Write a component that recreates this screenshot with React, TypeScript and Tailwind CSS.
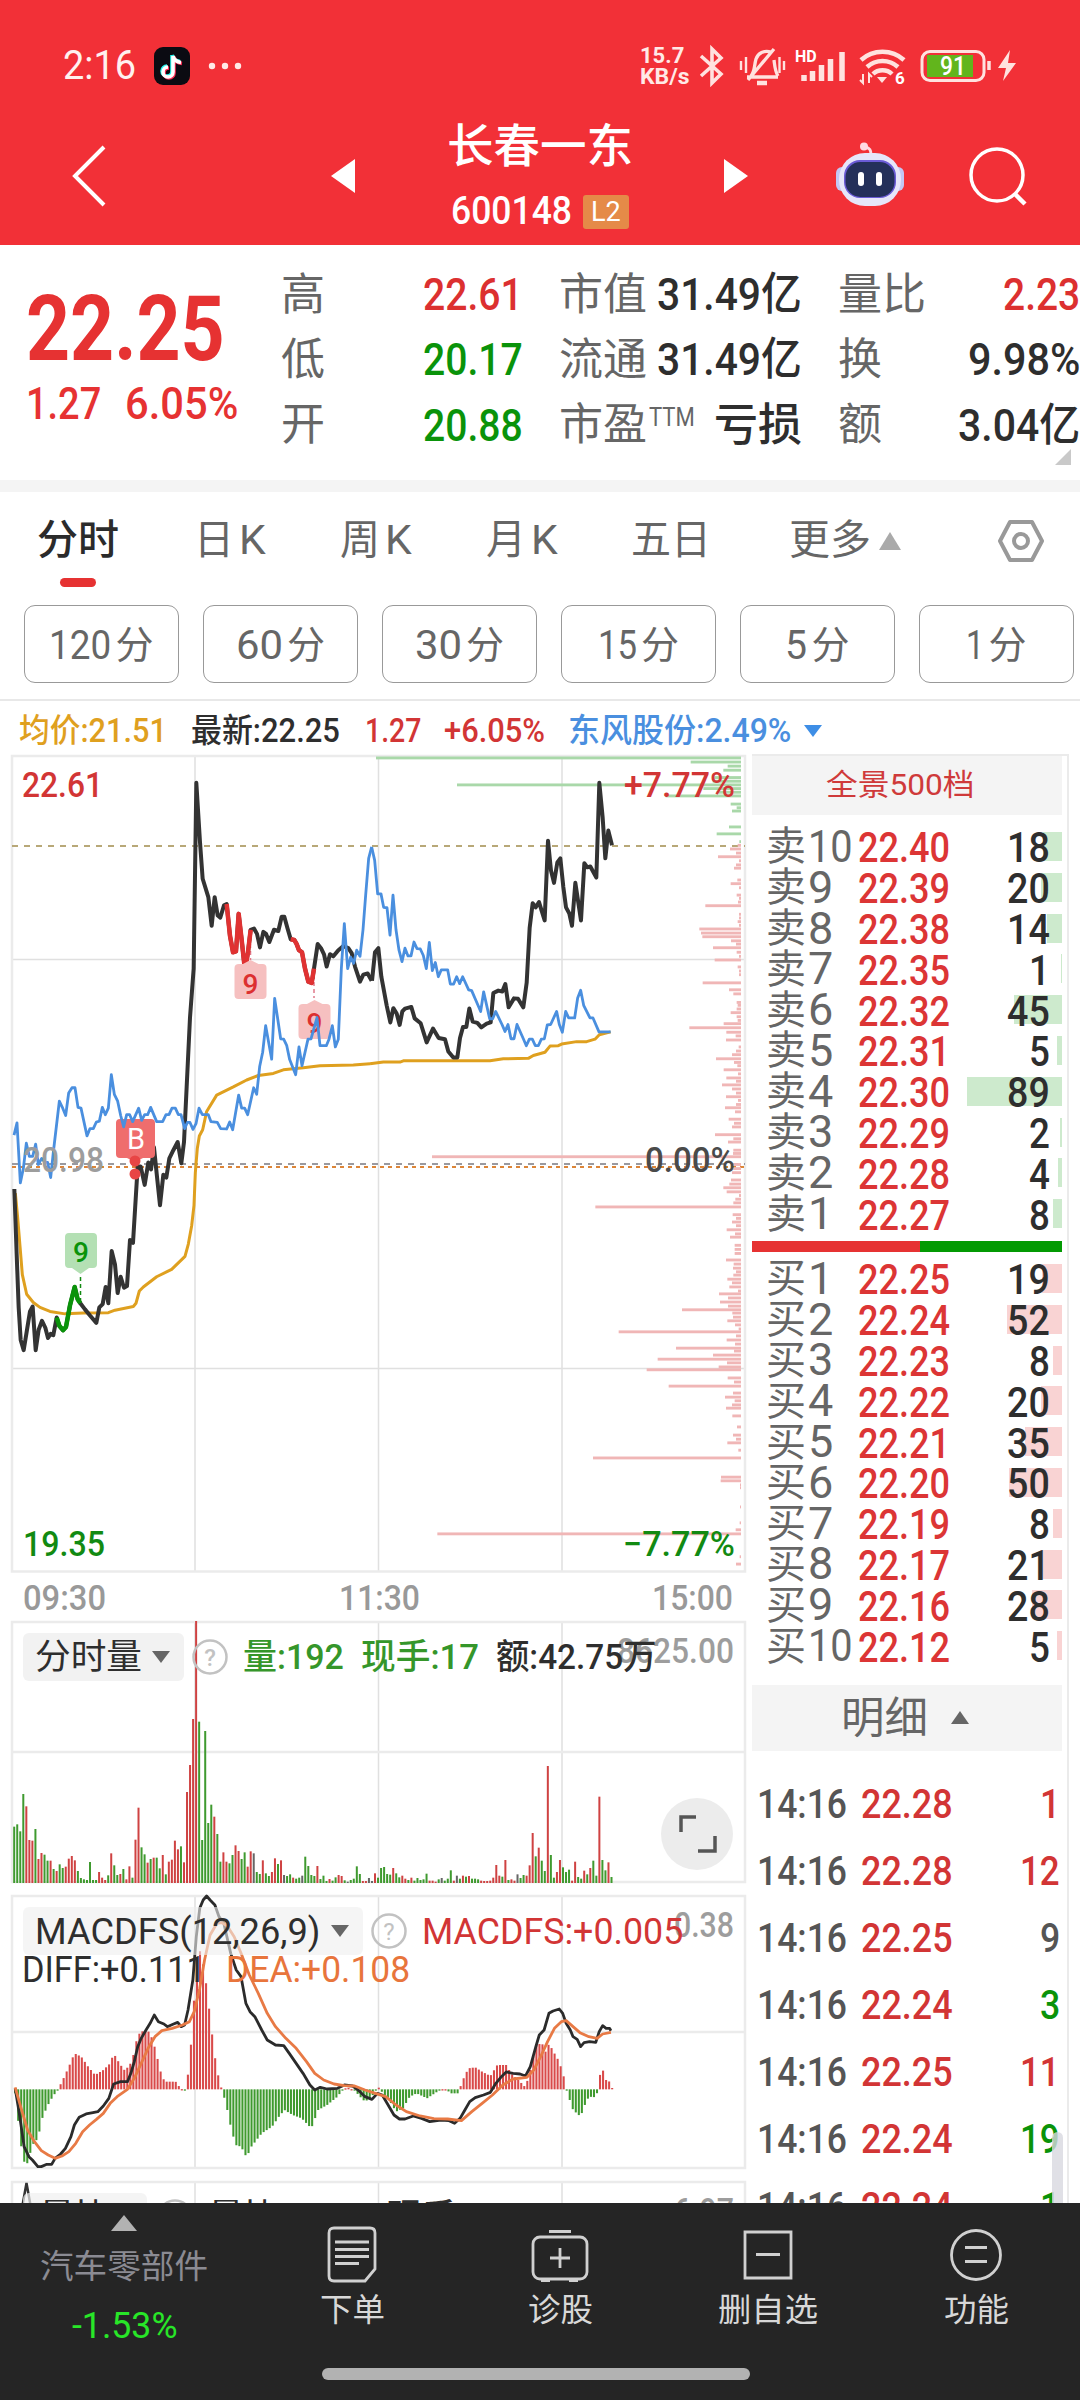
import { useLayoutEffect, useRef, useState } from "react";
import type { ReactNode } from "react";

// Text squeezed or stretched horizontally to a known width
function Fit({
  w,
  className = "",
  children,
}: {
  w: number;
  className?: string;
  children: ReactNode;
}) {
  const ref = useRef<HTMLSpanElement>(null);
  const [scale, setScale] = useState(1);

  useLayoutEffect(() => {
    if (ref.current) setScale(w / ref.current.offsetWidth);
  }, [w]);

  return (
    <span
      className={`inline-flex shrink-0 leading-none ${className}`}
      style={{ width: w }}
    >
      <span
        ref={ref}
        className="inline-block shrink-0 origin-left whitespace-nowrap"
        style={{ transform: `scaleX(${scale})` }}
      >
        {children}
      </span>
    </span>
  );
}

function StatusBar() {
  return (
    <div className="flex h-[132px] items-center pl-[63px] text-white">
      <Fit w={73} className="text-[40px] text-[#fff1ef]">
        2:16
      </Fit>
      <svg viewBox="0 0 36 38" className="ml-[18px] h-[38px] w-9">
        <rect width="36" height="38" rx="9" fill="#0b0b12" />
        <g fill="none" strokeWidth="3.6">
          <path d="M18 8v16a5 5 0 1 1-5-5M18 8c1 4 4 6 8 6.500" stroke="#25f4ee" />
          <path d="M20 10v16a5 5 0 1 1-5-5M20 10c1 4 4 6 8 6.500" stroke="#fe2c55" />
          <path d="M19 9v16a5 5 0 1 1-5-5M19 9c1 4 4 6 8 6.500" stroke="#fff" />
        </g>
      </svg>
      <svg viewBox="0 0 34 8" className="ml-[18px] h-2 w-[34px]" fill="#ffe9e6">
        <circle cx="4" cy="4" r="3.200" />
        <circle cx="17" cy="4" r="3.200" />
        <circle cx="30" cy="4" r="3.200" />
      </svg>
      <div className="ml-[398px] flex flex-col text-[#ffe9e6]">
        <Fit w={44} className="text-[22px] font-bold">
          15.7
        </Fit>
        <Fit w={50} className="-mt-px text-[22px] font-bold">
          KB/s
        </Fit>
      </div>
      <svg
        viewBox="698 40 324 52"
        className="ml-[8px] h-[52px] w-[324px]"
        fill="none"
        stroke="#ffe2df"
        strokeWidth="3.600"
      >
        <path d="M701 56l20 18-9 9V49l9 9-20 18" />
        <path d="M747 77h31M751 76c4-5 3-10 5-17 2-6 8-9 15-7M774 60c1 8 1 11 4 16M748 80L774 49" strokeWidth="3.300" />
        <path d="M741 61v9M746 57v16M779.500 57v16M784 61v9" strokeWidth="2.400" />
        <path d="M757 83h10" strokeWidth="4.500" />
        <path d="M804 81v-6M812.500 81V71M821.500 81V65M830.500 81V59M842 81V52" strokeWidth="5.500" />
        <path d="M861 60c12-11 31-11 43 0M867 67c9-8 22-8 31 0M873 74c5-5 14-5 19 0" strokeWidth="4.500" />
        <path d="M877 77h10l-5 6z" fill="#ffe2df" stroke="none" />
        <path d="M863 74v9l-3-3M869 83v-9l3 3" strokeWidth="2" />
        <rect x="922" y="51.500" width="62" height="29" rx="8" strokeWidth="3" />
        <rect x="927" y="55" width="46" height="22" fill="#62b51c" stroke="none" />
        <path d="M989 61v9" strokeWidth="3.500" />
        <path d="M1010 50l-12 18h8l-3 13 13-18h-8z" fill="#ffe2df" stroke="none" />
        <g fill="#fff" stroke="none" fontFamily="Roboto, sans-serif" fontWeight="700">
          <text x="795" y="62" fontSize="16">HD</text>
          <text x="895" y="84" fontSize="17">6</text>
          <text x="940" y="74.500" fontSize="25" fontWeight="500" textLength="26" lengthAdjust="spacingAndGlyphs">91</text>
        </g>
      </svg>
    </div>
  );
}

function Header() {
  return (
    <header className="h-[245px] bg-[#f23037]">
      <StatusBar />
      <div className="flex h-[88px] items-center text-white">
        <svg viewBox="0 0 36 64" className="ml-[71px] h-16 w-9" fill="none" stroke="#fff" strokeWidth="4">
          <path d="M33 3L4 32l29 29" />
        </svg>
        <svg viewBox="0 0 24 34" className="ml-[224px] h-[34px] w-6" fill="#fff">
          <path d="M24 0v34L0 17z" />
        </svg>
        <div className="ml-[92px] flex h-[114px] w-[186px] flex-col items-center pt-[4px]">
          <Fit w={186} className="text-[46px] font-medium">
            长春一东
          </Fit>
          <div className="mt-[23px] flex items-center gap-[11px]">
            <Fit w={121} className="text-[39px] font-medium">
              600148
            </Fit>
            <div className="flex h-[34px] w-[46px] items-center justify-center rounded-[3px] bg-[#e58a48]">
              <Fit w={30} className="text-[28px]">
                L2
              </Fit>
            </div>
          </div>
        </div>
        <svg viewBox="0 0 24 34" className="ml-[91px] h-[34px] w-6" fill="#fff">
          <path d="M0 0v34l24-17z" />
        </svg>
        <svg viewBox="0 0 70 66" className="ml-[87px] -mt-1 h-[66px] w-[70px]">
          <path d="M36 14c0-5-1-7-6-8" fill="none" stroke="#ffd9e2" strokeWidth="3" />
          <circle cx="29" cy="5.500" r="4" fill="#ffd9e2" />
          <rect x="1" y="26" width="12" height="24" rx="6" fill="#c3c7f4" />
          <rect x="57" y="26" width="12" height="24" rx="6" fill="#c3c7f4" />
          <rect x="4" y="12" width="62" height="53" rx="26" fill="#e6e6fa" />
          <rect x="9" y="19" width="52" height="38" rx="16" fill="#6a5bd6" />
          <rect x="10.500" y="21" width="49" height="35" rx="15" fill="#24305a" />
          <rect x="23" y="31" width="6" height="14" rx="3" fill="#fff" />
          <rect x="41" y="31" width="6" height="14" rx="3" fill="#fff" />
        </svg>
        <svg viewBox="0 0 60 60" className="ml-[64px] h-[60px] w-[60px]" fill="none" stroke="#fff" strokeWidth="3.500">
          <circle cx="28" cy="29" r="26" />
          <path d="M46 48l10 10" strokeWidth="4.500" />
        </svg>
      </div>
    </header>
  );
}

function QuoteLabel({ children }: { children: ReactNode }) {
  return <span className="text-[44px] leading-none text-[#666]">{children}</span>;
}

function Quote() {
  return (
    <section className="relative flex h-[235px] bg-white">
      <div className="w-[281px] pl-[26px] text-[#e63232]">
        <Fit w={199} className="mt-[40px] text-[90px] font-bold">
          22.25
        </Fit>
        <div className="mt-[6px] flex gap-[24px]">
          <Fit w={75} className="text-[45px] font-medium">
            1.27
          </Fit>
          <Fit w={113} className="text-[45px] font-medium">
            6.05%
          </Fit>
        </div>
      </div>
      <div className="grid h-[213px] w-[242px] grid-rows-3 items-center pt-[17px]">
        <div className="flex items-center justify-between">
          <QuoteLabel>高</QuoteLabel>
          <Fit w={100} className="text-[45px] font-medium text-[#dc3030]">22.61</Fit>
        </div>
        <div className="flex items-center justify-between">
          <QuoteLabel>低</QuoteLabel>
          <Fit w={100} className="text-[45px] font-medium text-[#0a930a]">20.17</Fit>
        </div>
        <div className="flex items-center justify-between">
          <QuoteLabel>开</QuoteLabel>
          <Fit w={100} className="text-[45px] font-medium text-[#0a930a]">20.88</Fit>
        </div>
      </div>
      <div className="ml-[36px] grid h-[213px] w-[243px] grid-rows-3 items-center pt-[17px] text-[#2e2e2e]">
        <div className="flex items-center justify-between">
          <QuoteLabel>市值</QuoteLabel>
          <Fit w={145} className="text-[45px] font-medium">31.49亿</Fit>
        </div>
        <div className="flex items-center justify-between">
          <QuoteLabel>流通</QuoteLabel>
          <Fit w={145} className="text-[45px] font-medium">31.49亿</Fit>
        </div>
        <div className="flex items-center">
          <QuoteLabel>市盈</QuoteLabel>
          <Fit w={46} className="ml-[2px] -mt-4 text-[25px] text-[#666]">TTM</Fit>
          <Fit w={88} className="ml-auto text-[45px] font-medium">亏损</Fit>
        </div>
      </div>
      <div className="ml-[36px] grid h-[213px] w-[242px] grid-rows-3 items-center pt-[17px] text-[#2e2e2e]">
        <div className="flex items-center justify-between">
          <QuoteLabel>量比</QuoteLabel>
          <Fit w={77} className="text-[45px] font-medium text-[#dc3030]">2.23</Fit>
        </div>
        <div className="flex items-center justify-between">
          <QuoteLabel>换</QuoteLabel>
          <Fit w={112} className="text-[45px] font-medium">9.98%</Fit>
        </div>
        <div className="flex items-center justify-between">
          <QuoteLabel>额</QuoteLabel>
          <Fit w={122} className="text-[45px] font-medium">3.04亿</Fit>
        </div>
      </div>
      <svg viewBox="0 0 16 16" className="absolute right-[9px] bottom-[15px] h-4 w-4" fill="#c9c9c9">
        <path d="M16 0v16H0z" />
      </svg>
    </section>
  );
}

function Tabs() {
  const periods = [
    { label: "120", w: 62 },
    { label: "60", w: 47 },
    { label: "30", w: 47 },
    { label: "15", w: 39 },
    { label: "5", w: 22 },
    { label: "1", w: 18 },
  ];

  return (
    <section className="h-[209px] border-b-2 border-[#e8e8e8]">
      <div className="flex h-[95px] items-center pt-[2px] pl-[37px] text-[41px] text-[#666]">
        <Fit w={82} className="font-medium text-[#2b2b2b]">分时</Fit>
        <Fit w={40} className="ml-[75px]">日</Fit>
        <Fit w={27} className="ml-[5px]">K</Fit>
        <Fit w={40} className="ml-[74px]">周</Fit>
        <Fit w={27} className="ml-[5px]">K</Fit>
        <Fit w={40} className="ml-[74px]">月</Fit>
        <Fit w={27} className="ml-[5px]">K</Fit>
        <Fit w={80} className="ml-[73px]">五日</Fit>
        <Fit w={82} className="ml-[78px]">更多</Fit>
        <svg viewBox="0 0 22 18" className="ml-[8px] h-[18px] w-[22px]" fill="#aaa">
          <path d="M11 0l11 18H0z" />
        </svg>
        <svg viewBox="0 0 46 44" className="ml-[97px] h-11 w-[46px]" fill="none" stroke="#999" strokeWidth="4" strokeLinejoin="round">
          <path d="M12 3h22l10 19-10 19H12L2 22z" />
          <circle cx="23" cy="22" r="7" />
        </svg>
      </div>
      <div className="-mt-[9px] ml-[60px] h-[9px] w-9 rounded-full bg-[#e63232]" />
      <div className="mt-[18px] flex gap-6 pl-6">
        {periods.map(({ label, w }) => (
          <button
            key={label}
            className="flex h-[78px] w-[155px] shrink-0 items-center justify-center gap-[4px] rounded-[11px] border-[1.500px] border-[#999] pt-[2px] text-[41px] text-[#666]"
          >
            <Fit w={w}>{label}</Fit>
            <span className="text-[38px] leading-none">分</span>
          </button>
        ))}
      </div>
    </section>
  );
}

function Legend() {
  return (
    <div className="flex h-[39px] items-end pl-[19px] text-[33px]">
      <div className="-mb-[4px] flex h-[27px] items-center">
        <Fit w={148} className="font-medium text-[#dfa01f]">均价:21.51</Fit>
        <Fit w={149} className="ml-[24px] font-medium text-[#2e2e2e]">最新:22.25</Fit>
        <Fit w={56} className="ml-[25px] font-medium text-[#d23535]">1.27</Fit>
        <Fit w={101} className="ml-[23px] font-medium text-[#d23535]">+6.05%</Fit>
        <Fit w={223} className="ml-[23px] font-medium text-[#4a8fdf]">东风股份:2.49%</Fit>
        <svg viewBox="0 0 18 12" className="ml-[13px] h-3 w-[18px]" fill="#3e8ee6">
          <path d="M0 0h18l-9 12z" />
        </svg>
      </div>
    </div>
  );
}

const priceA =
  "43,1100 50,1260 56,1390 62,1470 71,1495 80,1450 90,1400 98,1388 107,1495 116,1445 126,1423 136,1440 144,1465 152,1455 160,1458 170,1415 178,1435 189,1446 198,1438 210,1385 224,1340 233,1370 241,1380 255,1395 270,1410 289,1428 298,1390 308,1382 317,1340 325,1380 335,1252 345,1285 353,1355 362,1315 372,1342 381,1338 390,1225 399,1232 413,1045 422,1045 434,1090 445,1035 453,1052 462,998 471,1070 480,1140 490,1065 499,1072 508,1025 520,1005 533,985 544,1037 552,985 560,850 570,680 581,560 589,105 600,250 608,340 625,385 635,455 644,385 653,430 661,435 672,405 680,402 690,480 699,520 708,518 716,426 725,490 735,565 744,520 752,465 762,462 771,475 780,508 790,470 798,475 808,495 822,465 835,468 845,433 853,433 862,460 872,488 883,490 890,500 897,515 906,520 915,560 925,592 935,595 942,560 953,500 963,510 972,525 980,555 990,525 1000,530 1015,515 1030,505 1045,510 1055,522 1065,555 1080,592 1090,575 1103,572 1115,590";
const priceB =
  "6,590 15,520 25,510 34,580 50,650 61,692 70,657 80,670 89,698 97,665 105,658 124,654 134,682 152,694 170,741 189,707 206,730 225,733 235,763 250,778 262,778 270,730 279,703 289,703 298,658 308,690 322,693 334,704 350,695 362,692 370,620 385,614 397,616 406,598 416,655 432,633 444,634 460,655 470,595 479,460 488,400 497,410 507,397 524,442 534,247 543,320 552,350 562,300 571,290 580,360 588,410 598,425 606,455 616,350 633,442 643,302 652,312 661,310 679,337 688,105 698,190 706,290 715,222 726,258";
const peerA =
  "42,968 51,938 61,1085 70,1050 79,988 88,1020 98,1020 107,990 115,1040 125,1025 135,1035 143,1035 152,1072 160,1010 178,885 187,900 197,920 206,865 216,852 225,852 234,900 243,902 261,970 270,952 280,952 289,936 298,934 307,900 316,918 325,902 334,820 343,868 353,885 362,920 371,948 380,918 389,918 398,935 416,902 425,932 434,918 443,918 452,900 470,935 488,935 498,918 507,918 516,902 526,902 535,918 543,918 554,952 562,937 570,937 579,954 588,940 597,902 607,918 625,918 633,935 652,937 662,952 680,953 689,936 698,955 716,870 725,902 734,902 743,918 761,852 770,868 779,800 788,765 797,700 815,782 824,633 842,732 851,733 860,748 869,783 887,820 897,752 906,798 924,733 933,732 951,680 960,749 979,749 987,733 997,700 1006,752 1015,733 1024,560 1033,450 1043,560 1052,532 1061,547 1070,515 1080,530 1089,465 1097,380 1106,290 1115,262";
const peerB =
  "5,262 14,295 23,377 33,377 41,410 51,411 60,478 69,380 78,465 87,515 96,543 105,510 114,529 123,529 132,495 141,511 151,512 160,528 169,560 178,496 187,565 196,545 205,580 214,563 233,563 241,598 251,598 260,580 269,597 278,580 296,612 305,614 323,648 332,665 341,617 359,683 368,683 377,665 396,697 405,714 414,697 423,732 432,732 441,697 460,732 469,749 478,733 487,733 496,749 505,749 514,733 523,732 532,698 542,697 560,665 568,697 577,716 587,665 596,681 614,681 623,632 632,613 641,650 660,681 669,681 687,715 722,715";
const avgA =
  "46,1110 53,1170 60,1240 67,1310 80,1358 100,1378 120,1390 150,1400 195,1406 250,1404 325,1403 345,1397 400,1388 408,1380 418,1350 430,1340 470,1315 515,1297 555,1265 565,1235 575,1190 582,1140 586,1060 592,1000 598,970 608,955 620,910 650,870 700,850 740,833 775,822 820,817 850,808 910,803 960,798 1060,796 1110,793";
const avgB =
  "0,793 40,789 90,789 100,786 360,786 400,781 475,780 490,773 525,765 540,750 565,749 575,745 620,739 650,739 675,733 688,722 722,715";

// Order depth: position:left edge, all bars end at 1113
const askDepth =
  "44:18 54:962 64:1073 74:1060 92:1028 101:1028 110:261 119:1000 128:1040 137:887 157:1082 166:1100 174:1086 213:1077 230:1040 249:1108";
const bidDepth =
  "258:1103 267:1080 277:1098 286:1044 296:1107 306:1098 314:1092 343:1102 352:1082 362:1107 380:1100 388:1107 397:1104 406:1006 427:1107 436:1107 445:1103 454:1107 463:988 473:993 482:997 492:1083 500:1098 509:1029 520:1100 530:1107 539:1034 556:1103 566:1107 575:1107 595:998 612:1077 622:1090 643:1100 650:1103 659:1100 668:1082 678:1100 687:1103 695:1061 705:958 716:1069 725:1097 735:1068 752:1106 762:1098 771:1086 781:1038 790:1092 798:1102 808:1061 818:1104 828:1069 836:1098 845:1056 855:1086 865:1098 874:1068 883:1104 893:1098 901:1065 911:1095 929:1076 939:1092 948:1086 967:1035 977:1090 985:1074 1005:1090 1013:1089 1021:186 1040:1087 1050:1090 1060:1086 1078:1083 1088:1078 1097:1060 1107:1070 1116:1107 1125:1096 1134:1090 1144:676 1163:1088 1172:1098 1181:1086 1190:1098 1200:1070 1210:1095 1218:1080 1238:1094 1248:1094 1258:1094 1274:1068 1284:1091 1294:1089 1303:1098 1311:1090 1321:1072 1330:1086 1340:1078 1350:1104 1357:1047 1367:1074 1377:1050 1387:1074 1396:936 1404:1087 1414:1089 1423:1072 1433:1095 1443:1106 1450:746 1460:1098 1470:1070 1480:1095 1490:918 1497:1092 1507:1029 1517:863 1526:1071 1536:1046 1543:830 1563:1073 1573:1092 1583:896 1600:1089 1610:1065 1619:1094 1629:1086 1637:1068 1656:1087 1683:1101 1703:1089 1713:1098 1722:1072 1740:1105 1759:669 1806:1053 1815:1052 1825:1110 1832:1110 1879:1110 1918:1109 1935:1097 1945:202 2001:1109 2019:1098";

function DepthBars({ data, fill }: { data: string; fill: string }) {
  return (
    <g fill={fill}>
      {data.split(" ").map((item) => {
        const [y, x] = item.split(":").map(Number);
        return <rect key={y} x={x} y={y - 3.5} width={1113 - x} height="7" />;
      })}
    </g>
  );
}

function Line({ points, color, width }: { points: string; color: string; width: number }) {
  return (
    <polyline
      points={points}
      fill="none"
      stroke={color}
      strokeWidth={width}
      strokeLinejoin="round"
      vectorEffect="non-scaling-stroke"
    />
  );
}

function Label({
  x,
  y,
  w,
  color,
  size = 35,
  children,
}: {
  x: number;
  y: number;
  w: number;
  color: string;
  size?: number;
  children: ReactNode;
}) {
  return (
    <text
      x={x}
      y={y}
      textLength={w}
      lengthAdjust="spacingAndGlyphs"
      fill={color}
      fontSize={size}
      fontWeight="500"
    >
      {children}
    </text>
  );
}

function PriceChart() {
  return (
    <svg viewBox="0 740 750 880" className="block h-[880px] w-[750px]">
      <g stroke="#e0e0e0" strokeWidth="1.500" fill="none">
        <path d="M12 959.500H745M12 1368.500H745M195 756V1571M378.500 756V1571M562 756V1571" />
        <path d="M12 756H745V1571.500H12z" stroke="#ebebeb" strokeWidth="2.500" />
      </g>
      <path d="M12 846H745" stroke="#b8a878" strokeWidth="2" strokeDasharray="6 6" />
      <path d="M12 1164H745" stroke="#9a9aa0" strokeWidth="1.800" strokeDasharray="6 6" />
      <path d="M12 1167H745" stroke="#dc8538" strokeWidth="1.800" strokeDasharray="4 4" />
      <g transform="translate(370 740) scale(.33333 .40816)">
        <DepthBars data={askDepth} fill="#a9d8a9" />
        <DepthBars data={bidDepth} fill="#f0b6b6" />
      </g>
      <Label x={22} y={797} w={81} color="#d23535">22.61</Label>
      <Label x={624} y={797} w={111} color="#d23535">+7.77%</Label>
      <Label x={645} y={1172} w={90} color="#4a4a4a">0.00%</Label>
      <Label x={23} y={1556} w={82} color="#128a12">19.35</Label>
      <Label x={623} y={1556} w={112} color="#128a12">−7.77%</Label>
      <Label x={23} y={1610} w={83} color="#999">09:30</Label>
      <Label x={339} y={1610} w={81} color="#999">11:30</Label>
      <Label x={652} y={1610} w={81} color="#999">15:00</Label>

      <g strokeWidth="1.500" strokeDasharray="4 3">
        <path d="M80.500 1302v-28" stroke="#128a12" />
        <path d="M250.500 930v30M314 968v30" stroke="#e07a8a" />
      </g>
      <g transform="translate(0 740) scale(.33333 .40816)">
        <Line points={avgA} color="#dfa01f" width={3} />
        <g transform="translate(1110 0)">
          <Line points={avgB} color="#dfa01f" width={3} />
        </g>
        <Line points={priceA} color="#333" width={4} />
        <g transform="translate(1110 0)">
          <Line points={priceB} color="#333" width={4} />
        </g>
        <Line
          points="170,1415 178,1435 189,1446 198,1438 210,1385 224,1340 233,1370 241,1380"
          color="#0a930a"
          width={4.5}
        />
        <Line
          points="680,402 690,480 699,520 708,518 716,426 725,490 735,565 744,520 752,465"
          color="#e03232"
          width={4.5}
        />
        <Line
          points="872,488 883,490 890,500 897,515 906,520 915,560 925,592 935,595 942,560"
          color="#e03232"
          width={4.5}
        />
      </g>
      <path d="M69 1233h24q4 0 4 4v27q0 4-4 4h-4l-8.500 6-8.500-6h-3q-4 0-4-4v-27q0-4 4-4z" fill="#b4e0b4" />
      <path d="M239 964h4l7.500-4 8 4h4q4 0 4 4v27q0 4-4 4h-24q-4 0-4-4v-27q0-4 4.500-4z" fill="#f6c0c0" />
      <path d="M303 1004h4l7.500-4 8 4h4q4 0 4 4v27q0 4-4 4h-24q-4 0-4-4v-27q0-4 4.500-4z" fill="#f6c0c0" />
      <g fontSize="28" fontWeight="500" textAnchor="middle">
        <text x="81" y="1262" fill="#0a930a">9</text>
        <text x="250.500" y="994" fill="#dc3030">9</text>
        <text x="314.500" y="1033" fill="#dc3030">9</text>
      </g>
      <path d="M120 1119h31q4 0 4 4v31q0 4-4 4h-8l-8 4-8-4h-7q-4 0-4-4v-31q0-4 4-4z" fill="#ef6d6d" />
      <text x="136" y="1149" fill="#fff" fontSize="29" textAnchor="middle">B</text>
      <circle cx="135" cy="1161" r="5.500" fill="#e84545" />
      <circle cx="135" cy="1174" r="5.500" fill="#e84545" />
      <g transform="translate(0 740) scale(.33333 .40816)">
        <Line points={peerA} color="#4a8fdf" width={2.8} />
        <g transform="translate(1110 0)">
          <Line points={peerB} color="#4a8fdf" width={2.8} />
        </g>
      </g>
      <Label x={23} y={1172} w={81} color="#9d9d9d">20.98</Label>
    </svg>
  );
}

const volumes =
  "g650 g643 g664 g552 r589 r690 r692 g657 r747 r729 g734 g752 r752 g777 r783 g763 g774 r770 r746 r738 r751 g783 g804 g808 g810 g756 g810 g810 r786 r803 r810 g796 r730 g766 g795 r792 g777 r808 r769 g803 r689 r593 g712 g733 r758 g747 r743 g743 g775 r735 g793 r755 r749 r692 r718 g709 r757 r546 r465 r327 r33 g335 g690 g363 g639 g584 r620 g672 g755 r727 r755 g760 g735 r706 r723 g747 g727 r770 r724 k730 g786 g792 r751 g790 g798 r786 r745 g762 r751 k795 g798 g793 r803 g806 g803 k797 g740 g768 g795 g798 r768 g807 g797 g813 r807 g812 g802 r795 r798 g811 k815 g810 g806 g769 g792 r813 r813 k804 k813 r790 g803 g774 g771 g792 g794 r774 g790 g802 r797 r806 g810 r803 g812 g804 g810 g808 g791 r812 r812 r815 g808 k804 g812 g806 g781 r812 k797 g806 r797 g800 r798 g806 g806 g808 r812 r813 r813 r812 r803 r765 r797 g800 r750 g810 r808 r812 k793 g804 g795 r797 r766 r669 g739 r713 g752 g783 r468 g735 g803 r786 r750 g772 g786 g779 r812 r755 g801 g806 r782 g793 r774 g752 g797 r560 g750 g781 r757 g801";

const barColors: Record<string, string> = {
  g: "#3f9a2f",
  r: "#cf4242",
  k: "#666",
};

function Help() {
  return (
    <svg viewBox="0 0 36 36" className="h-9 w-9 shrink-0">
      <circle cx="18" cy="18" r="16.500" fill="none" stroke="#c2c2c2" strokeWidth="2.500" />
      <text x="18" y="26.500" fill="#c2c2c2" fontSize="24" textAnchor="middle">?</text>
    </svg>
  );
}

function Down() {
  return (
    <svg viewBox="0 0 18 12" className="h-3 w-[18px] shrink-0" fill="#666">
      <path d="M0 0h18l-9 12z" />
    </svg>
  );
}

function VolumeChart() {
  return (
    <div className="relative h-[266px]">
      <svg viewBox="0 1620 750 266" className="block h-[266px] w-[750px]">
        <path d="M195 1622V1882M378.500 1622V1882M562 1622V1882" stroke="#e0e0e0" strokeWidth="1.500" />
        <path d="M12 1752H745M12 1622H745V1882H12z" fill="none" stroke="#ebebeb" strokeWidth="2.500" />
        <rect x="23" y="1633" width="161" height="48" rx="6" fill="#f2f2f2" />
        {volumes.split(" ").map((v, i) => {
          const h = (819 - Number(v.slice(1))) / 3;
          return (
            <rect key={i} x={13.2 + i * 3.032} y={1883 - h} width="2" height={h} fill={barColors[v[0]]} />
          );
        })}
        <Label x={617} y={1663} w={117} color="#9d9d9d">8625.00</Label>
        <circle cx="697" cy="1834" r="36" fill="#ececec" />
        <path d="M681 1832v-15h15M698 1851h17v-15" fill="none" stroke="#555" strokeWidth="3.500" />
      </svg>
      <div className="absolute top-[13px] left-[35px] flex h-12 items-center text-[35px] font-medium">
        <Fit w={107} className="font-normal text-[#2e2e2e]">分时量</Fit>
        <div className="ml-[10px] flex">
          <Down />
        </div>
        <div className="ml-[22px] flex">
          <Help />
        </div>
        <Fit w={101} className="ml-[15px] text-[#35962a]">量:192</Fit>
        <Fit w={118} className="ml-[17px] text-[#35962a]">现手:17</Fit>
        <Fit w={161} className="ml-[17px] text-[#2e2e2e]">额:42.75万</Fit>
      </div>
    </div>
  );
}

const diff =
  "22,625 28,700 35,800 42,830 47,840 55,860 60,860 68,853 75,853 80,835 88,822 95,805 103,770 108,735 115,712 125,702 135,698 142,695 150,678 158,655 165,612 175,605 185,605 190,580 195,545 200,500 205,475 212,450 218,430 224,405 230,425 238,432 243,440 252,432 258,427 263,440 268,435 273,390 280,300 285,170 290,85 295,60 300,48 305,60 312,75 318,110 325,130 335,220 343,270 350,290 357,370 363,395 370,410 380,450 388,480 400,495 412,497 420,520 430,550 440,580 450,615 457,630 465,622 475,627 490,625 500,615 512,618 520,630 530,650 540,658 548,640 555,645 565,680 572,705 580,717 588,717 600,708 612,715 624,725 640,720 652,722 660,730 668,715 675,690 682,665 690,653 702,645 712,637 720,610 728,590 735,576 745,580 755,582 763,588 770,560 778,500 783,465 790,450 797,400 803,393 812,387 817,400 822,430 828,450 832,470 838,478 843,500 848,488 856,485 865,487 870,455 875,437 880,445 885,445 887,452";
const dea =
  "22,622 30,680 40,750 50,785 60,812 70,825 80,835 90,828 100,815 110,790 120,755 130,735 140,718 150,700 160,670 170,650 185,628 195,595 205,550 215,505 225,470 235,452 250,445 265,435 275,425 282,395 290,325 297,240 305,165 315,130 322,128 330,138 340,170 350,220 362,285 375,340 388,400 400,440 415,475 430,505 445,545 457,580 470,600 485,612 500,617 515,618 530,630 545,640 560,650 575,675 590,695 610,708 630,716 650,717 670,722 685,695 700,670 715,645 730,615 745,597 765,592 775,570 785,530 795,485 805,445 815,425 822,422 832,440 842,458 855,470 867,475 875,462 887,457";
const histogram = [
  [22, 640], [30, 790], [35, 845], [40, 850], [47, 795], [55, 775], [62, 710], [72, 665], [80, 640], [84, 628],
  [90, 605], [100, 560], [108, 520], [118, 530], [128, 560], [138, 585], [150, 570], [160, 550], [165, 520],
  [172, 545], [180, 570], [187, 560], [192, 540], [200, 465], [208, 452], [216, 455], [222, 480], [228, 530],
  [235, 590], [240, 605], [255, 605], [262, 625], [268, 632], [272, 600], [277, 500], [283, 320], [289, 205],
  [293, 230], [300, 320], [306, 430], [312, 530], [318, 600], [322, 628], [328, 670], [335, 740], [342, 795],
  [350, 800], [358, 832], [365, 800], [380, 760], [395, 740], [405, 710], [413, 690], [425, 705], [438, 715],
  [452, 745], [462, 690], [475, 675], [490, 650], [498, 628], [505, 622], [515, 632], [525, 655], [530, 665],
  [540, 650], [545, 630], [549, 620], [553, 632], [565, 660], [575, 695], [585, 685], [595, 650], [605, 640],
  [620, 655], [635, 635], [645, 625], [655, 640], [665, 640], [672, 600], [680, 565], [690, 562], [700, 575],
  [712, 588], [722, 555], [735, 555], [742, 580], [755, 605], [763, 622], [770, 570], [778, 495], [787, 490],
  [793, 520], [797, 490], [805, 520], [812, 545], [820, 600], [824, 640], [832, 690], [843, 710], [848, 680],
  [855, 650], [866, 652], [870, 590], [875, 568], [880, 600], [885, 605], [889, 625],
];

// Linear value of the histogram outline at x
function histAt(x: number) {
  const i = Math.max(1, histogram.findIndex((p) => p[0] >= x));
  const [x0, y0] = histogram[i - 1];
  const [x1, y1] = histogram[i];
  return y0 + ((y1 - y0) * (x - x0)) / (x1 - x0);
}

function MacdChart() {
  const bars = Array.from({ length: 198 }, (_, i) => 22 + i * 4.4);
  return (
    <div className="relative h-[289px]">
      <svg viewBox="0 1886 750 289" className="block h-[289px] w-[750px]">
        <path d="M195 1896V2168M378.500 1896V2168M562 1896V2168" stroke="#e0e0e0" strokeWidth="1.500" />
        <path d="M12 2032H745M12 1896H745V2168H12z" fill="none" stroke="#ebebeb" strokeWidth="2.500" />
        <g transform="translate(0 1880) scale(.68875 .33333)">
          {bars.map((x) => {
            const y = histAt(x);
            return (
              <rect
                key={x}
                x={x - 1.5}
                y={Math.min(y, 628)}
                width="3"
                height={Math.max(4, Math.abs(y - 628))}
                fill={y < 628 ? "#d94a4a" : "#3f9a2f"}
              />
            );
          })}
          <Line points={diff} color="#2b2b2b" width={2.8} />
          <Line points={dea} color="#e87a45" width={2.8} />
        </g>
        <rect x="23" y="1907" width="340" height="48" rx="6" fill="#efefef" fillOpacity=".6" />
        <Label x={674} y={1937} w={60} color="#9d9d9d">0.38</Label>
      </svg>
      <div className="absolute top-[21px] left-[35px] flex h-12 items-center text-[37px]">
        <Fit w={285} className="text-[#2e2e2e]">MACDFS(12,26,9)</Fit>
        <div className="ml-[11px] flex">
          <Down />
        </div>
        <div className="ml-[22px] flex">
          <Help />
        </div>
        <Fit w={261} className="ml-[15px] text-[#d23535]">MACDFS:+0.005</Fit>
      </div>
      <div className="absolute top-[66px] left-[22px] flex h-9 items-center text-[36px]">
        <Fit w={184} className="text-[#2e2e2e]">DIFF:+0.111</Fit>
        <Fit w={184} className="ml-[20px] text-[#e8753c]">DEA:+0.108</Fit>
      </div>
    </div>
  );
}

function RatioChart() {
  return (
    <div className="relative h-[28px] overflow-hidden">
      <svg viewBox="0 2175 750 60" className="block h-[60px] w-[750px]">
        <path d="M195 2182v60M378.500 2182v60M562 2182v60" stroke="#e0e0e0" strokeWidth="1.500" />
        <path d="M12 2235V2182H745v60" fill="none" stroke="#ebebeb" strokeWidth="2.500" />
        <path d="M22 2208L26.500 2183 31 2208" fill="none" stroke="#333" strokeWidth="2.500" />
        <rect x="23" y="2193" width="124" height="48" rx="6" fill="#efefef" fillOpacity=".7" />
        <Label x={674} y={2223} w={60} color="#9d9d9d">6.97</Label>
      </svg>
      <div className="absolute top-[18px] left-[39px] flex h-12 items-center text-[35px] text-[#2e2e2e]">
        <Fit w={72}>量比</Fit>
        <div className="ml-[46px] flex">
          <Help />
        </div>
        <Fit w={72} className="ml-[15px]">量比</Fit>
        <Fit w={70} className="ml-[107px] font-medium">现手</Fit>
      </div>
    </div>
  );
}

const sells = [
  { n: 10, price: "22.40", vol: 18 },
  { n: 9, price: "22.39", vol: 20 },
  { n: 8, price: "22.38", vol: 14 },
  { n: 7, price: "22.35", vol: 1 },
  { n: 6, price: "22.32", vol: 45 },
  { n: 5, price: "22.31", vol: 5 },
  { n: 4, price: "22.30", vol: 89 },
  { n: 3, price: "22.29", vol: 2 },
  { n: 2, price: "22.28", vol: 4 },
  { n: 1, price: "22.27", vol: 8 },
];

const buys = [
  { n: 1, price: "22.25", vol: 19 },
  { n: 2, price: "22.24", vol: 52 },
  { n: 3, price: "22.23", vol: 8 },
  { n: 4, price: "22.22", vol: 20 },
  { n: 5, price: "22.21", vol: 35 },
  { n: 6, price: "22.20", vol: 50 },
  { n: 7, price: "22.19", vol: 8 },
  { n: 8, price: "22.17", vol: 21 },
  { n: 9, price: "22.16", vol: 28 },
  { n: 10, price: "22.12", vol: 5 },
];

const trades = [
  { price: "22.28", vol: "1", color: "text-[#d23535]" },
  { price: "22.28", vol: "12", color: "text-[#d23535]" },
  { price: "22.25", vol: "9", color: "text-[#555]" },
  { price: "22.24", vol: "3", color: "text-[#0a930a]" },
  { price: "22.25", vol: "11", color: "text-[#d23535]" },
  { price: "22.24", vol: "19", color: "text-[#0a930a]" },
  { price: "22.24", vol: "1", color: "text-[#0a930a]" },
];

function BookRow({
  side,
  n,
  price,
  vol,
  bar,
}: {
  side: string;
  n: number;
  price: string;
  vol: number;
  bar: string;
}) {
  return (
    <div className="relative flex h-[40.800px] items-center pl-[14px]">
      <div
        className={`absolute top-[5px] right-0 h-[29px] ${bar}`}
        style={{ width: vol * 1.067 }}
      />
      <span className="relative w-[42px] text-[40px] leading-none text-[#666]">{side}</span>
      <Fit w={n === 10 ? 45 : 25} className="relative -top-px text-[45px] text-[#666]">
        {n}
      </Fit>
      <div className={n === 10 ? "w-[5px]" : "w-[25px]"} />
      <Fit w={92} className="relative top-px text-[42px] font-medium text-[#dc3535]">
        {price}
      </Fit>
      <Fit
        w={vol > 9 ? 43 : 21}
        className="relative top-px mr-[12px] ml-auto text-[42px] font-medium text-[#2e2e2e]"
      >
        {vol}
      </Fit>
    </div>
  );
}

function OrderBook() {
  return (
    <div className="relative mt-[14px] w-[317px] border-t-2 border-r-2 border-[#ebebeb] pr-[5px]">
      <div className="flex h-[59px] items-center justify-center bg-[#f4f4f4] pr-[14px] text-[30px] text-[#cf3a3a]">
        <Fit w={149} className="-mt-px">全景500档</Fit>
      </div>
      <div className="mt-[12px]">
        {sells.map((row) => (
          <BookRow key={row.n} side="卖" bar="bg-[#cdeacd]" {...row} />
        ))}
      </div>
      <div className="mt-[6px] flex h-[11px]">
        <div className="w-[168px] bg-[#e63232]" />
        <div className="flex-1 bg-[#039a03]" />
      </div>
      <div className="mt-[7px]">
        {buys.map((row) => (
          <BookRow key={row.n} side="买" bar="bg-[#f9d3d3]" {...row} />
        ))}
      </div>
      <div className="mt-[18px] flex h-[66px] items-center bg-[#f4f4f4] pl-[89px] text-[43px] text-[#666]">
        <Fit w={87} className="mt-px">明细</Fit>
        <svg viewBox="0 0 18 13" className="ml-[23px] h-[13px] w-[18px]" fill="#666">
          <path d="M9 0l9 13H0z" />
        </svg>
      </div>
      <div className="mt-[20px]">
        {trades.map(({ price, vol, color }, index) => (
          <div key={index} className="flex h-[67.100px] items-center pl-[5px] text-[41px]">
            <Fit w={90} className="font-medium text-[#555]">14:16</Fit>
            <Fit w={92} className="ml-[14px] font-medium text-[#d23535]">{price}</Fit>
            <Fit w={vol.length * 20} className={`mr-[2px] ml-auto font-medium ${color}`}>
              {vol}
            </Fit>
          </div>
        ))}
      </div>
      <div className="absolute right-[4px] bottom-0 h-[71px] w-[11px] rounded-t-md bg-[#d8d8e0]/80" />
    </div>
  );
}

function BottomItem({ label, w, children }: { label: string; w: number; children: ReactNode }) {
  return (
    <div className="flex w-[208px] flex-col items-center text-[32px] text-[#d8d8d8]">
      <svg viewBox="0 0 60 60" className="mt-[22px] h-[60px] w-[60px]" fill="none" stroke="#d0d0d0" strokeWidth="2.800">
        {children}
      </svg>
      <Fit w={w} className="mt-[9px]">
        {label}
      </Fit>
    </div>
  );
}

function BottomBar() {
  return (
    <footer className="h-[197px] bg-[#252525]">
      <div className="flex h-[165px]">
        <div className="flex w-[248px] flex-col items-center text-[33px]">
          <svg viewBox="0 0 26 16" className="mt-3 h-4 w-[26px]" fill="#b2b2b2">
            <path d="M13 0l13 16H0z" />
          </svg>
          <Fit w={168} className="mt-[19px] text-[#8b8b93]">汽车零部件</Fit>
          <Fit w={106} className="mt-[25px] ml-[2px] text-[36px] text-[#28e628]">-1.53%</Fit>
        </div>
        <BottomItem label="下单" w={65}>
          <path d="M12 3h36q5 0 5 5v36L43 56H12q-5 0-5-5V8q0-5 5-5z" />
          <path d="M13 17h34M13 24.500h34M13 31.500h34M13 38.500h24" strokeWidth="3.200" />
        </BottomItem>
        <BottomItem label="诊股" w={65}>
          <rect x="3" y="12" width="54" height="42" rx="7" />
          <path d="M19 6.500h22M11 55.500h9M39 55.500h9M20 33h20M30 23v20" />
        </BottomItem>
        <BottomItem label="删自选" w={100}>
          <path d="M7 7h46v46H7zM18 29.500h24" />
        </BottomItem>
        <BottomItem label="功能" w={65}>
          <circle cx="30" cy="30" r="24.500" />
          <path d="M19 22.500h22M19 36.500h22" />
        </BottomItem>
      </div>
      <div className="ml-[322px] h-[12px] w-[428px] rounded-full bg-[#b2b2b2]" />
    </footer>
  );
}

export default function App() {
  return (
    <div className="h-[2400px] w-[1080px] overflow-hidden bg-white font-[Roboto,'Noto_Sans_CJK_SC',sans-serif]">
      <Header />
      <Quote />
      <div className="h-3 bg-[#f4f4f4]" />
      <Tabs />
      <Legend />
      <div className="flex h-[1463px] overflow-hidden">
        <div className="w-[752px] shrink-0">
          <PriceChart />
          <VolumeChart />
          <MacdChart />
          <RatioChart />
        </div>
        <OrderBook />
      </div>
      <BottomBar />
    </div>
  );
}
